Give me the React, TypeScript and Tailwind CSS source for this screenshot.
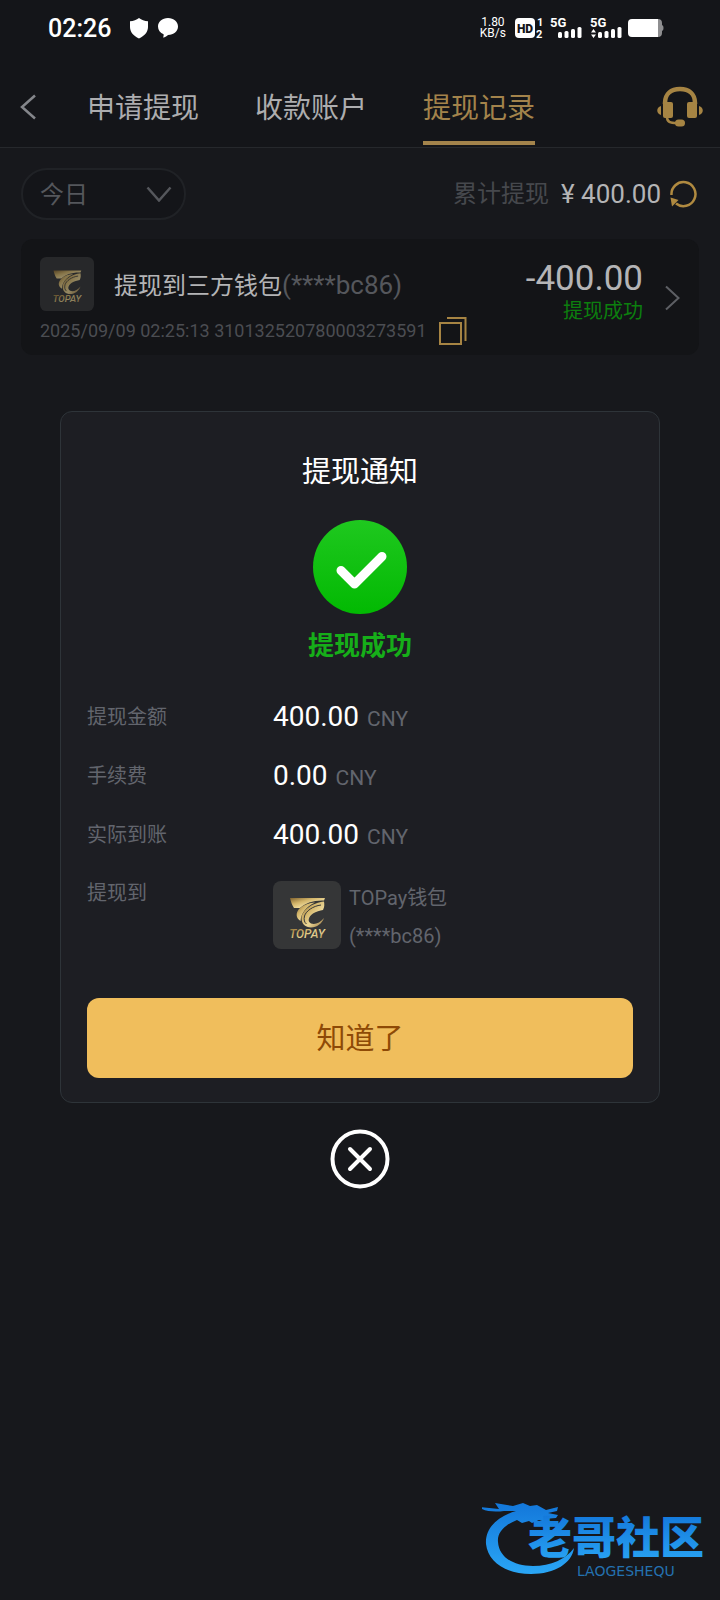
import { useState } from "react";

const tabs = ["申请提现", "收款账户", "提现记录"];

const amounts = [
  { label: "提现金额", value: "400.00" },
  { label: "手续费", value: "0.00" },
  { label: "实际到账", value: "400.00" },
];

function SignalIcon({ arrows = false }: { arrows?: boolean }) {
  return (
    <svg width="32" height="30" viewBox="0 -4 32 30" fill="#fff">
      <text x="0" y="10" fontSize="13" fontWeight="700">
        5G
      </text>
      {arrows && <path d="M1 15.500 3.500 12 6 15.500zM1 17.500h5L3.500 21z" />}
      <rect x="8" y="15" width="4" height="6" rx="1.500" />
      <rect x="14.500" y="14" width="4" height="7" rx="1.500" />
      <rect x="21" y="12" width="4" height="9" rx="1.500" />
      <rect x="27.500" y="10" width="4" height="11" rx="1.500" />
    </svg>
  );
}

function StatusBar() {
  return (
    <div className="flex h-14 items-center justify-between pr-14 pl-12 text-white">
      <div className="flex items-center">
        <span className="pt-0.5 text-[25px] leading-8 font-medium">02:26</span>
        <svg className="ml-[18px]" width="20" height="22" viewBox="0 0 20 22" fill="#fff">
          <path d="M10 1c2.500 2 5.500 3 9 3.200V10c0 5-3.500 9-9 11.500C4.500 19 1 15 1 10V4.200C4.500 4 7.500 3 10 1z" />
        </svg>
        <svg className="ml-2" width="22" height="22" viewBox="0 0 22 22" fill="#fff">
          <path d="M11 1c5.800 0 10 3.700 10 8.500S16.800 18 11 18c-1 1.200-2.600 2.200-5 2.500.6-1 .8-2 .6-3.300C3.200 15.800 1 13 1 9.500 1 4.700 5.200 1 11 1z" />
        </svg>
      </div>
      <div className="flex items-center">
        <div className="text-center text-xs leading-[11px]">
          <div>1.80</div>
          <div>KB/s</div>
        </div>
        <svg className="ml-2" width="30" height="30" viewBox="0 -4 30 30" fill="#fff">
          <rect x="1" y="1" width="20" height="20" rx="4" />
          <text x="11" y="15.500" fontSize="12" fontWeight="900" textAnchor="middle" fill="#141519">
            HD
          </text>
          <text x="23" y="9" fontSize="11" fontWeight="700">
            1
          </text>
          <text x="22" y="21" fontSize="11" fontWeight="700">
            2
          </text>
        </svg>
        <span className="ml-1.5 flex gap-2">
          <SignalIcon />
          <SignalIcon arrows />
        </span>
        <svg className="ml-1.5" width="36" height="22" viewBox="0 0 36 22">
          <path d="M29 2h1a4 4 0 0 1 4 4v2c2 .5 2 5.500 0 6v2a4 4 0 0 1-4 4h-1z" fill="#8e8e90" />
          <path d="M4 2h26v18H4a4 4 0 0 1-4-4V6a4 4 0 0 1 4-4z" fill="#fff" />
        </svg>
      </div>
    </div>
  );
}

function TopayLogo({ id, className }: { id: string; className?: string }) {
  return (
    <svg className={className} viewBox="0 0 68 68">
      <defs>
        <linearGradient id={id} x1="0" y1="0" x2="1" y2="1">
          <stop offset="0" stopColor="#80622e" />
          <stop offset="0.350" stopColor="#d3b56a" />
          <stop offset="0.600" stopColor="#ecd797" />
          <stop offset="1" stopColor="#94713a" />
        </linearGradient>
      </defs>
      <rect width="68" height="68" rx="8" fill="#353637" />
      <path d="M17 17h35l-1 2.500C41 19 32 22 27 27h-6c-2-3-3-6-4-10z" fill={`url(#${id})`} />
      <path
        d="M27 27c-5 5-4 10 .5 13 .5-7 5-14 14.500-18.500-6 .5-11 2-15 5.500z"
        fill={`url(#${id})`}
      />
      <path
        d="M51 20.500C40 21.500 29 29 28.500 37c0 6 4 9.500 9.500 9.500 6 0 11-4 13-9.500-4 5-9 7-13 5.500-4-2-2.500-7 2-10 3-2 7-3 10-3.500 1.500-3 1.500-5.500 1-8.500z"
        fill={`url(#${id})`}
      />
      <path d="M48 24c-8 1-15 6-16.500 11-1 4 0 6.500 2 8" fill="none" stroke="#353637" />
      <text
        x="34"
        y="57"
        textAnchor="middle"
        fontSize="12"
        fontWeight="500"
        fontStyle="italic"
        fill={`url(#${id})`}
      >
        TOPAY
      </text>
    </svg>
  );
}

function Header() {
  const [active, setActive] = useState(2);

  return (
    <header className="border-b border-[#26282c] bg-[#141519]">
      <StatusBar />
      <div className="flex items-center pt-4 pr-4 pb-[2px] pl-5">
        <button aria-label="返回" className="w-[67px] pb-1">
          <svg width="16" height="26" viewBox="0 0 16 26" fill="none" stroke="#84868b" strokeWidth="2.500">
            <path d="M15 1.500 2 13l13 11.500" />
          </svg>
        </button>
        <nav className="flex gap-14">
          {tabs.map((tab, i) => (
            <button
              key={tab}
              onClick={() => setActive(i)}
              className={`h-[73px] border-b-4 pt-1 text-[28px] ${
                i === active ? "border-[#a3834b] text-[#a3834b]" : "border-transparent text-[#adadaf]"
              }`}
            >
              {tab}
            </button>
          ))}
        </nav>
        <button aria-label="客服" className="ml-auto pb-1">
          <svg width="48" height="42" viewBox="0 0 48 42" fill="#a68443">
            <path
              d="M9 18v-1C9 8 15 3 24 3s15 5 15 14v1"
              fill="none"
              stroke="#a68443"
              strokeWidth="4.500"
            />
            <rect x="7" y="16" width="10" height="16" rx="2" />
            <rect x="31" y="16" width="10" height="16" rx="2" />
            <path d="M5 20v9c-5-1-5-8 0-9zM43 20v9c5-1 5-8 0-9z" />
            <path d="M11 31c0 5 3 6 10 6" fill="none" stroke="#a68443" strokeWidth="2.500" />
            <rect x="19" y="33.500" width="10" height="7" rx="3.500" />
          </svg>
        </button>
      </div>
    </header>
  );
}

function RecordCard() {
  return (
    <article className="mt-[19px] flex items-start rounded-xl bg-[#131417] pt-[18px] pr-[19px] pb-[9px] pl-[19px]">
      <div className="flex-1">
        <div className="flex items-center">
          <TopayLogo id="gold-small" className="size-[54px] opacity-60" />
          <p className="ml-5 pt-0.5 text-2xl text-[#b4b4b6]">
            提现到三方钱包<span className="text-[26px] text-[#55575c]">(****bc86)</span>
          </p>
        </div>
        <div className="mt-[5px] flex items-center gap-3 text-lg text-[#4b4d52]">
          <span>2025/09/09 02:25:13 310132520780003273591</span>
          <button aria-label="复制">
            <svg width="28" height="30" viewBox="0 0 28 30" fill="none" stroke="#a68443" strokeWidth="2">
              <path d="M1 7h21v21H1zM8 2h18.500v23" />
            </svg>
          </button>
        </div>
      </div>
      <div className="mr-[22px] text-right">
        <div className="pt-0.5 text-[35px] leading-10 text-[#b4b4b6]">-400.00</div>
        <div className="text-xl leading-6 text-[#0c7f0e]">提现成功</div>
      </div>
      <svg
        className="mt-7"
        width="15"
        height="26"
        viewBox="0 0 15 26"
        fill="none"
        stroke="#5d5f64"
        strokeWidth="2"
      >
        <path d="m1 1.500 12.500 11.500L1 24.500" />
      </svg>
    </article>
  );
}

function NoticeDialog({ onClose }: { onClose: () => void }) {
  return (
    <div className="absolute inset-0 flex flex-col items-center justify-center gap-[26px] px-15">
      <div
        role="dialog"
        aria-labelledby="notice-title"
        className="flex w-full flex-col items-center rounded-xl border border-[#2e3439] bg-[#1d1e23] px-[26px] pt-10 pb-6"
      >
        <h2 id="notice-title" className="text-[29px] leading-10 text-white">
          提现通知
        </h2>
        <svg className="mt-[27px]" width="96" height="96" viewBox="0 0 96 96">
          <defs>
            <linearGradient id="ok" x1="0" y1="0" x2="0" y2="1">
              <stop offset="0" stopColor="#1fc81f" />
              <stop offset="1" stopColor="#02b902" />
            </linearGradient>
          </defs>
          <circle cx="48" cy="48" r="47" fill="url(#ok)" />
          <path
            d="M29 51.500 42.500 65 70 37.500"
            fill="none"
            stroke="#fff"
            strokeWidth="9"
            strokeLinecap="round"
            strokeLinejoin="round"
          />
        </svg>
        <p className="mt-[13px] text-[26px] leading-9 font-bold text-[#16ae19]">提现成功</p>
        <dl className="mt-[23px] w-full text-xl text-[#62656d]">
          {amounts.map((row) => (
            <div key={row.label} className="flex h-[59px] items-center">
              <dt className="w-[186px]">{row.label}</dt>
              <dd className="flex items-baseline gap-2">
                <span className="text-[28px] text-white">{row.value}</span>
                <span className="text-[21px]">CNY</span>
              </dd>
            </div>
          ))}
          <div className="flex">
            <dt className="w-[186px] leading-[59px]">提现到</dt>
            <dd className="flex gap-2 pt-[15px] leading-[38px]">
              <TopayLogo id="gold-large" className="mt-0.5 size-[68px]" />
              <div>
                <div>TOPay钱包</div>
                <div>(****bc86)</div>
              </div>
            </dd>
          </div>
        </dl>
        <button
          onClick={onClose}
          className="mt-[43px] h-20 w-full rounded-xl bg-[#f0be5c] pt-1 text-[29px] text-[#8e4a06]"
        >
          知道了
        </button>
      </div>
      <button aria-label="关闭" onClick={onClose}>
        <svg width="60" height="60" viewBox="0 0 60 60" fill="none" stroke="#fff" strokeWidth="4">
          <circle cx="30" cy="30" r="27.500" />
          <path d="m20 20 20 20M40 20 20 40" strokeLinecap="round" />
        </svg>
      </button>
    </div>
  );
}

function Watermark() {
  return (
    <svg className="absolute right-2 bottom-4 w-[230px]" viewBox="0 0 230 88">
      <defs>
        <linearGradient id="sea" x1="0" y1="0" x2="0" y2="1">
          <stop offset="0" stopColor="#1377da" />
          <stop offset="1" stopColor="#2aa6f5" />
        </linearGradient>
      </defs>
      <g fill="url(#sea)">
        <path d="M34 15C14 21 3 33 4 48c2 18 20 30 45 30 24 0 41-11 43-26-8 11-23 18-41 18-20 0-34-9-35-24-1-9 6-17 19-22l5 3 7-2 3 2 7-3 6 2-1-3 12-1 2-3-10-2 9-2 1-4-12 3-9-5-7 1-7-3-10 3-18-3 4 6-20-2c5 5 17 5 25 4z" />
        <text x="46" y="58" fontSize="44" fontWeight="900">
          老哥社区
        </text>
      </g>
      <text x="95" y="80" fontSize="14" fill="#2471b0" fontFamily="DejaVu Sans, sans-serif">
        LAOGESHEQU
      </text>
    </svg>
  );
}

export default function App() {
  const [open, setOpen] = useState(true);

  return (
    <div className="relative min-h-screen bg-[#17181c] font-['Roboto','Noto_Sans_CJK_SC',sans-serif]">
      <Header />
      <main className="px-[21px] pt-5">
        <div className="flex items-center justify-between">
          <div className="relative">
            <select
              aria-label="日期"
              className="h-[52px] w-[165px] appearance-none rounded-full border-2 border-[#202226] bg-[#141519] pt-0.5 pl-[17px] text-2xl text-[#55575c]"
            >
              <option>今日</option>
              <option>昨日</option>
            </select>
            <svg
              className="pointer-events-none absolute top-[18px] right-3.5"
              width="26"
              height="16"
              viewBox="0 0 26 16"
              fill="none"
              stroke="#55575c"
              strokeWidth="2.500"
            >
              <path d="m1.500 1.500 11.500 13 11.500-13" />
            </svg>
          </div>
          <div className="flex items-center pr-0.5">
            <span className="text-2xl text-[#46484d]">累计提现</span>
            <span className="ml-3 text-[26px] text-[#b4b4b6]">¥ 400.00</span>
            <button aria-label="刷新" className="ml-2">
              <svg width="28" height="28" viewBox="0 0 28 28" fill="none" stroke="#b08a40" strokeWidth="2.500">
                <path d="M2.500 15A12 12 0 1 1 7 23.500" />
                <path d="M1.500 17.500 9.500 20 3 26.500z" fill="#b08a40" stroke="none" />
              </svg>
            </button>
          </div>
        </div>
        <RecordCard />
      </main>
      {open && <NoticeDialog onClose={() => setOpen(false)} />}
      <Watermark />
    </div>
  );
}
